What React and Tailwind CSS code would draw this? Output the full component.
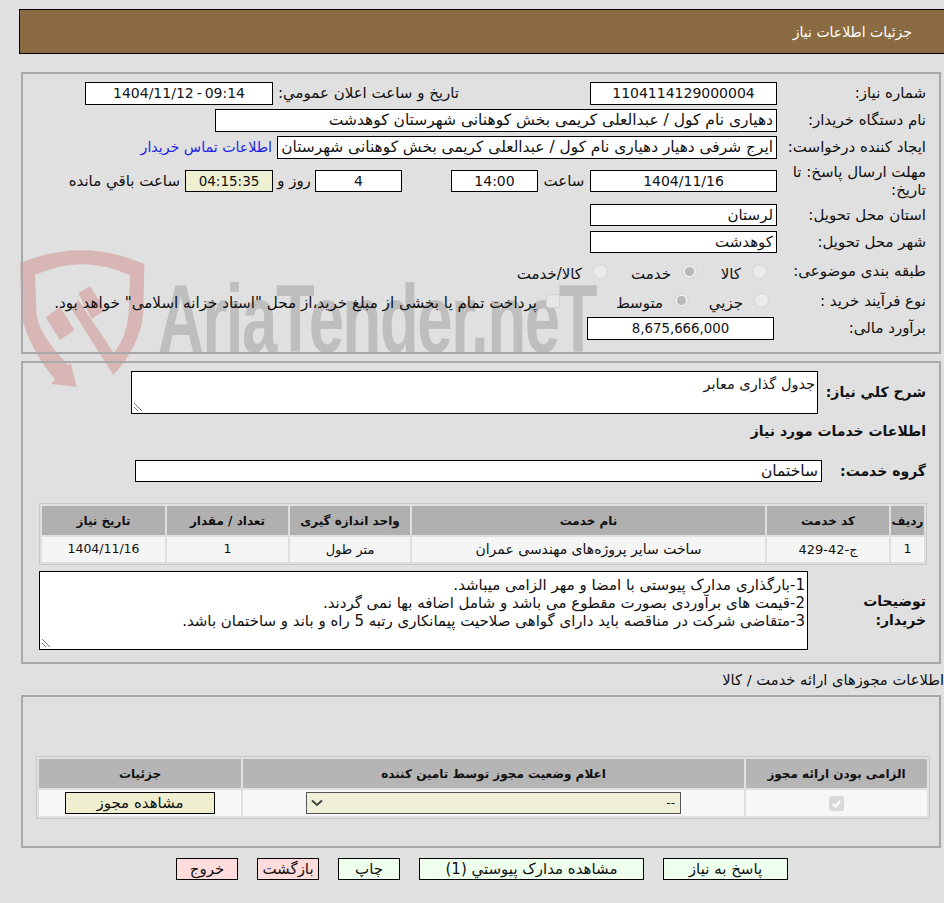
const font = "font-['DejaVu_Sans','Noto_Sans',sans-serif]";

function Box({ className = '', h = 'h-[23px] leading-[21px]', bg = 'bg-white', dir, children }) {
  return (
    <div dir={dir} className={`border border-black overflow-hidden whitespace-nowrap ${h} ${bg} ${className}`}>
      {children}
    </div>
  );
}

function Radio({ checked }) {
  return (
    <span className="inline-flex shrink-0 items-center justify-center w-[15px] h-[15px] rounded-full border border-[#d4d4d4] bg-[#ebebeb]">
      {checked && <span className="w-[9px] h-[9px] rounded-full bg-[#b8b8b8]" />}
    </span>
  );
}

function Row({ label, children, className = 'h-[27px]' }) {
  return (
    <div className={`flex items-center ${className}`}>
      <div className="w-[162px] pr-[13px] shrink-0 text-[15px] whitespace-normal">{label}</div>
      {children}
    </div>
  );
}

function Btn({ className = 'bg-[#eeffee]', w, children }) {
  return (
    <button className={`h-[22px] border border-black text-[15px] leading-[20px] ${w} ${className}`}>{children}</button>
  );
}

function Grip() {
  return (
    <svg width="10" height="10" viewBox="0 0 10 10" className="absolute left-[1px] bottom-[1px]">
      <path d="M1 1 L9 9 M1 5 L5 9" stroke="#777" strokeWidth="1" fill="none" />
    </svg>
  );
}

function Watermark() {
  return (
    <div className="absolute left-0 top-0 w-[944px] h-[400px] pointer-events-none" dir="ltr">
      <svg width="300" height="160" viewBox="0 0 900 480" className="absolute left-[10px] top-[240px]">
        <path
          d="M30 70 Q215 -10 403 72 L400 220 Q390 320 310 405 L183 205 L205 180 L312 340 Q350 290 356 220 L360 105 Q215 40 75 105 L80 225 Q90 290 175 375 L182 368 L200 440 L122 432 L135 418 Q60 330 35 230 Z"
          fill="#d9b6b6"
        />
        <path d="M107 232 L150 300 L193 270 L150 200 Z M205 160 L240 138 L285 210 L245 237 Z" fill="#d9b6b6" />
      </svg>
      <span className="absolute left-[158px] top-[264px] text-[#bebebe] font-bold text-[96px] leading-[110px] tracking-[-2px] font-['Liberation_Sans',sans-serif] origin-left scale-x-[0.66] whitespace-nowrap">
        AriaTender.neT
      </span>
    </div>
  );
}

export default function App() {
  return (
    <div dir="rtl" className={`relative w-[944px] h-[903px] bg-[#e0e0e0] text-[#111] text-[14px] ${font} overflow-hidden`}>
      <Watermark />
      <div className="relative pt-[9px] pl-[19px]">
        {/* title bar */}
        <div className="h-[45px] bg-[#8b6b42] border border-black border-r-0 text-white text-[14px] flex items-center pr-[32px] pt-[2px]">جزئیات اطلاعات نیاز</div>

        {/* top form */}
        <div className="mt-[18px] ml-[2px] mr-[3px] h-[282px] border-2 border-[#a8a8a8] pt-[6px]">
          <Row label="شماره نیاز:">
            <Box className="w-[187px] text-center">1104114129000004</Box>
            <div className="w-[317px] pr-[131px] whitespace-nowrap text-[15px]">تاریخ و ساعت اعلان عمومي:</div>
            <Box dir="ltr" className="w-[188px] text-center [word-spacing:-1.5px]">1404/11/12 - 09:14</Box>
          </Row>
          <Row label="نام دستگاه خریدار:">
            <Box className="w-[562px] pr-[3px] text-[15.5px]">دهیاری نام کول / عبدالعلی کریمی بخش کوهنانی شهرستان کوهدشت</Box>
          </Row>
          <Row label="ایجاد کننده درخواست:">
            <Box className="w-[500px] pr-[3px] text-[15.4px]">ایرج شرفی دهیار دهیاری نام کول / عبدالعلی کریمی بخش کوهنانی شهرستان</Box>
            <span className="mr-[5px] text-[#2020e8] whitespace-nowrap text-[14.2px]">اطلاعات تماس خریدار</span>
          </Row>
          <Row label={<span className="block leading-[18px]">مهلت ارسال پاسخ: تا تاریخ:</span>} className="h-[40px]">
            <Box h="h-[22px] leading-[20px]" className="w-[187px] text-center">1404/11/16</Box>
            <span className="w-[52px] text-center whitespace-nowrap text-[15px]">ساعت</span>
            <Box h="h-[22px] leading-[20px]" className="w-[87px] text-center">14:00</Box>
            <span className="w-[49px]" />
            <Box h="h-[22px] leading-[20px]" className="w-[87px] text-center">4</Box>
            <span className="w-[42px] text-center whitespace-nowrap text-[15px]">روز و</span>
            <Box h="h-[22px] leading-[20px]" bg="bg-[#efefd2]" className="w-[88px] text-center text-[13.5px]">04:15:35</Box>
            <span className="mr-[5px] whitespace-nowrap text-[15px]">ساعت باقي مانده</span>
          </Row>
          <Row label="استان محل تحویل:" className="h-[28px]">
            <Box h="h-[22px] leading-[20px]" className="w-[187px] pr-[3px] text-[15px]">لرستان</Box>
          </Row>
          <Row label="شهر محل تحویل:" className="h-[26px]">
            <Box h="h-[22px] leading-[20px]" className="w-[187px] pr-[3px] text-[15px]">کوهدشت</Box>
          </Row>
          <Row label="طبقه بندی موضوعی:" className="h-[32px]">
            <div className="flex items-center whitespace-nowrap text-[15px] mr-[10px]">
              <Radio />
              <span className="mr-[11px] w-[44px] pt-[6px]">کالا</span>
              <Radio checked />
              <span className="mr-[11px] w-[63px] pt-[6px]">خدمت</span>
              <Radio />
              <span className="mr-[11px] pt-[6px]">کالا/خدمت</span>
            </div>
          </Row>
          <Row label="نوع فرآیند خرید :" className="h-[28px]">
            <div className="flex items-center whitespace-nowrap text-[15px] mr-[8px]">
              <Radio />
              <span className="mr-[11px] w-[54px] pt-[5px]">جزيي</span>
              <Radio checked />
              <span className="mr-[11px] w-[103px] pt-[5px]">متوسط</span>
              <span className="w-[14px] h-[14px] shrink-0 rounded-[3px] border border-[#d4d4d4] bg-[#e6e6e6]" />
              <span className="mr-[9px] pt-[5px] text-[15.15px]">پرداخت تمام یا بخشی از مبلغ خرید،از محل "اسناد خزانه اسلامی" خواهد بود.</span>
            </div>
          </Row>
          <Row label="برآورد مالی:">
            <Box className="w-[187px] mr-[3px] text-center text-[13.3px]">8,675,666,000</Box>
          </Row>
        </div>

        {/* description and services */}
        <div className="mt-[7px] ml-[2px] mr-[3px] h-[303px] border-2 border-[#a8a8a8]">
          <div className="flex items-start h-[51px] pt-[8px]">
            <div className="w-[121px] pr-[13px] pt-[11px] font-bold text-[14px] whitespace-nowrap shrink-0">شرح كلي نیاز:</div>
            <div className="relative w-[687px] h-[43px] border border-black bg-white pr-[2px] pt-[2px] whitespace-nowrap text-[14.5px]">
              جدول گذاری معابر
              <Grip />
            </div>
          </div>
          <div className="pr-[13px] font-bold text-[14px] h-[34px] leading-[34px]">اطلاعات خدمات مورد نیاز</div>
          <div className="flex items-center h-[46px]">
            <div className="w-[117px] pr-[13px] font-bold text-[14px] whitespace-nowrap shrink-0">گروه خدمت:</div>
            <Box h="h-[22px] leading-[20px]" className="w-[687px] pr-[3px] text-[15.5px]">ساختمان</Box>
          </div>

          <div className="mt-[9px] mr-[12px] w-[888px] border border-[#c8c8c8] p-[2px] flex flex-col gap-[2px]">
            <div className="grid grid-cols-[33px_122px_353px_120px_121px_123px] gap-[2px] h-[29px] font-bold text-[12px]">
              {['ردیف', 'کد خدمت', 'نام خدمت', 'واحد اندازه گیری', 'تعداد / مقدار', 'تاریخ نیاز'].map(t => (
                <div key={t} className="bg-[#b0b0b0] flex items-center justify-center whitespace-nowrap">{t}</div>
              ))}
            </div>
            <div className="grid grid-cols-[33px_122px_353px_120px_121px_123px] gap-[2px] h-[25px] text-[14px]">
              <div className="bg-[#f5f5f5] flex items-center justify-center text-[12.5px]">1</div>
              <div className="bg-[#f5f5f5] flex items-center justify-center whitespace-nowrap text-[13px]">ج-42-429</div>
              <div className="bg-[#f5f5f5] flex items-center justify-center whitespace-nowrap">ساخت سایر پروژه‌های مهندسی عمران</div>
              <div className="bg-[#f5f5f5] flex items-center justify-center whitespace-nowrap text-[13px]">متر طول</div>
              <div className="bg-[#f5f5f5] flex items-center justify-center text-[12.5px]">1</div>
              <div className="bg-[#f5f5f5] flex items-center justify-center text-[12.5px]">1404/11/16</div>
            </div>
          </div>

          <div className="flex mt-[6px]">
            <div className="w-[131px] pr-[13px] pt-[21px] font-bold text-[14px] leading-[19px] shrink-0">توضیحات خریدار:</div>
            <div className="relative w-[769px] h-[79px] border border-black bg-white pr-[2px] pt-[4px] text-[15px] leading-[18px] whitespace-nowrap">
              <div>1-بارگذاری مدارک پیوستی با امضا و مهر الزامی میباشد.</div>
              <div>2-قیمت های برآوردی بصورت مقطوع می باشد و شامل اضافه بها نمی گردند.</div>
              <div>3-متقاضی شرکت در مناقصه باید دارای گواهی صلاحیت پیمانکاری رتبه 5 راه و باند و ساختمان باشد.</div>
              <Grip />
            </div>
          </div>
        </div>

        <div className="h-[31px] leading-[32px] whitespace-nowrap text-[14.7px]">اطلاعات مجوزهای ارائه خدمت / کالا</div>

        {/* licences */}
        <div className="ml-[2px] mr-[3px] h-[153px] border-2 border-[#a8a8a8] pt-[59px]">
          <div className="mr-[9px] w-[894px] border border-[#c8c8c8] p-[2px] flex flex-col gap-[2px]">
            <div className="grid grid-cols-[181px_501px_202px] gap-[2px] h-[29px] font-bold text-[12px]">
              {['الزامی بودن ارائه مجوز', 'اعلام وضعیت مجوز توسط تامین کننده', 'جزئیات'].map(t => (
                <div key={t} className="bg-[#b5b5b5] flex items-center justify-center whitespace-nowrap">{t}</div>
              ))}
            </div>
            <div className="grid grid-cols-[181px_501px_202px] gap-[2px] h-[26px]">
              <div className="bg-[#f7f7f7] flex items-center justify-center">
                <span className="w-[15px] h-[15px] rounded-[3px] bg-[#d8d8d8] flex items-center justify-center">
                  <svg width="11" height="11" viewBox="0 0 12 12"><path d="M2 6.5 L5 9.5 L10 3" fill="none" stroke="#fff" strokeWidth="2.2" /></svg>
                </span>
              </div>
              <div className="bg-[#f7f7f7] flex items-center justify-center">
                <div className="w-[375px] h-[22px] border border-[#555] bg-[#f0f0d8] flex items-center justify-between pr-[5px] pl-[4px] text-[12px]">
                  <span>--</span>
                  <svg width="12" height="8" viewBox="0 0 12 8"><path d="M1 1.5 L6 6 L11 1.5" fill="none" stroke="#444" strokeWidth="2" /></svg>
                </div>
              </div>
              <div className="bg-[#f7f7f7] flex items-center justify-center">
                <div className="w-[150px] h-[22px] border border-black bg-[#efefd0] text-center leading-[20px] text-[15px]">مشاهده مجوز</div>
              </div>
            </div>
          </div>
        </div>

        {/* actions */}
        <div className="mt-[10px] flex gap-[19px] pr-[156px]">
          <Btn w="w-[125px]">پاسخ به نیاز</Btn>
          <Btn w="w-[225px]">مشاهده مدارک پیوستي (1)</Btn>
          <Btn w="w-[62px]">چاپ</Btn>
          <Btn w="w-[62px]" className="bg-[#ffdcdc]">بازگشت</Btn>
          <Btn w="w-[62px]" className="bg-[#ffdcdc]">خروج</Btn>
        </div>
      </div>
    </div>
  );
}
